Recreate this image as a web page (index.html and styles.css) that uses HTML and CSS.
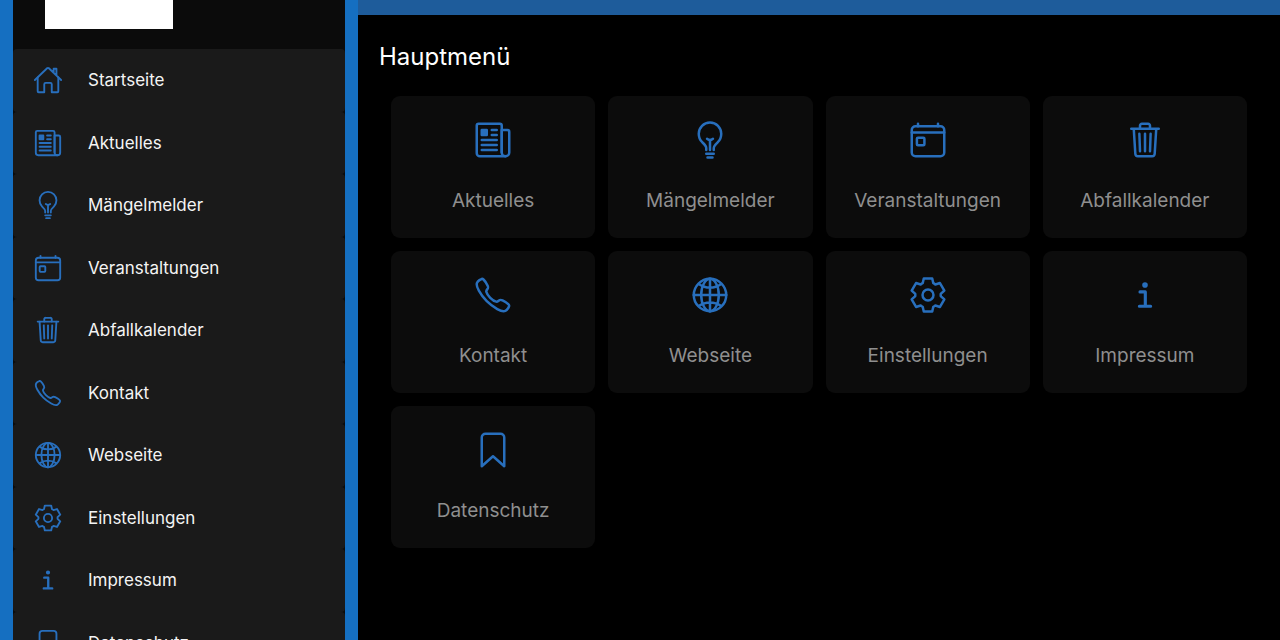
FILE: index.html
```html
<!DOCTYPE html>
<html lang="de">
<head>
    <meta charset="UTF-8">
    <meta name="viewport" content="width=device-width, initial-scale=1.0">
    <title>Hauptmenü</title>
    <link rel="stylesheet" href="styles.css">
</head>
<body>
    <!-- Icons -->
    <svg class="icon-sprite" aria-hidden="true">
        <symbol id="icon-home" viewBox="0 0 512 512">
            <path d="M80 212v236a16 16 0 0016 16h96V328a24 24 0 0124-24h80a24 24 0 0124 24v136h96a16 16 0 0016-16V212"/>
            <path d="M480 256L266.89 52c-5-5.28-16.69-5.34-21.78 0L32 256M400 179V64h-48v69"/>
        </symbol>
        <symbol id="icon-news" viewBox="0 0 512 512">
            <path d="M368 415.86V72a24.07 24.07 0 00-24-24H72a24.07 24.07 0 00-24 24v352a40.12 40.12 0 0040 40h328"/>
            <path d="M416 464h0a48 48 0 01-48-48V128h72a24 24 0 0124 24v264a48 48 0 01-48 48z"/>
            <path d="M240 128h64M240 192h64M112 256h192M112 320h192M112 384h192"/>
            <rect class="solid" x="112" y="128" width="64" height="64"/>
        </symbol>
        <symbol id="icon-bulb" viewBox="0 0 512 512">
            <path d="M304 384v-24c0-29 31.54-56.43 52-76 28.84-27.57 44-64.61 44-108 0-80-63.73-144-144-144a143.6 143.6 0 00-144 144c0 41.84 15.81 81.39 44 108 20.35 19.21 52 46.7 52 76v24M224 480h64M208 432h96M256 384V256"/>
            <path d="M294 240s-21.51 16-38 16-38-16-38-16"/>
        </symbol>
        <symbol id="icon-calendar" viewBox="0 0 512 512">
            <rect x="48" y="80" width="416" height="384" rx="48"/>
            <rect x="114" y="226" width="96" height="96" rx="13"/>
            <path d="M128 80V48M384 80V48M464 160H48"/>
        </symbol>
        <symbol id="icon-trash" viewBox="0 0 512 512">
            <path d="M112 112l20 320c.95 18.49 14.4 32 32 32h184c17.67 0 30.87-13.51 32-32l20-320M80 112h352"/>
            <path d="M192 112V72h0a23.93 23.93 0 0124-24h80a23.93 23.93 0 0124 24h0v40M256 176v224M184 176l8 224M328 176l-8 224"/>
        </symbol>
        <symbol id="icon-call" viewBox="0 0 512 512">
            <path d="M451 374c-15.88-16-54.34-39.35-73-48.76-24.3-12.24-26.3-13.24-45.4.95-12.74 9.47-21.21 17.93-36.12 14.75s-47.31-21.11-75.68-49.39-47.34-61.62-50.53-76.48 5.41-23.23 14.79-36c13.22-18 12.22-21 .92-45.3-8.81-18.9-32.84-57-48.9-72.8C119.9 44 119.9 47 108.83 51.6A160.15 160.15 0 0083 65.37C67 76 58.12 84.83 51.91 98.1s-9 44.38 23.07 102.64 54.57 88.05 101.14 134.49S258.5 406.64 310.85 436c64.76 36.27 89.6 29.2 102.91 23s22.18-15 32.83-31a159.09 159.09 0 0013.8-25.8C465 391.17 468 391.17 451 374z"/>
        </symbol>
        <symbol id="icon-globe" viewBox="0 0 512 512">
            <circle cx="256" cy="256" r="208"/>
            <path d="M256 48c-58.07 0-112.67 93.13-112.67 208S197.93 464 256 464s112.67-93.13 112.67-208S314.07 48 256 48z"/>
            <path d="M117.33 117.33c38.24 27.15 86.38 43.34 138.67 43.34s100.43-16.19 138.67-43.34M394.67 394.67c-38.24-27.15-86.38-43.34-138.67-43.34s-100.43 16.19-138.67 43.34M256 48v416M464 256H48"/>
        </symbol>
        <symbol id="icon-settings" viewBox="0 0 512 512">
            <path d="M202 44L310 44L324 105Q336 110 350 121L409 103L465 199L419 242V270L465 313L409 409L350 391Q336 402 324 407L310 468L202 468L188 407Q176 402 162 391L103 409L47 313L93 270V242L47 199L103 103L162 121Q176 110 188 105Z"/>
            <circle cx="256" cy="256" r="70"/>
        </symbol>
        <symbol id="icon-info" viewBox="0 0 512 512">
            <path class="bold" d="M192 216h68v184M184 400h144"/>
            <circle class="solid" cx="256" cy="128" r="20"/>
        </symbol>
        <symbol id="icon-bookmark" viewBox="0 0 512 512">
            <path d="M352 48H160a48 48 0 00-48 48v368l144-128 144 128V96a48 48 0 00-48-48z"/>
        </symbol>
    </svg>

    <div class="app">
        <aside class="sidebar">
            <div class="sidebar-header">
                <div class="logo"></div>
            </div>
            <nav class="menu">
                <a class="menu-item" href="#start"><svg class="icon"><use href="#icon-home"/></svg>Startseite</a>
                <a class="menu-item" href="#aktuelles"><svg class="icon"><use href="#icon-news"/></svg>Aktuelles</a>
                <a class="menu-item" href="#maengelmelder"><svg class="icon"><use href="#icon-bulb"/></svg>Mängelmelder</a>
                <a class="menu-item" href="#veranstaltungen"><svg class="icon"><use href="#icon-calendar"/></svg>Veranstaltungen</a>
                <a class="menu-item" href="#abfallkalender"><svg class="icon"><use href="#icon-trash"/></svg>Abfallkalender</a>
                <a class="menu-item" href="#kontakt"><svg class="icon"><use href="#icon-call"/></svg>Kontakt</a>
                <a class="menu-item" href="#webseite"><svg class="icon"><use href="#icon-globe"/></svg>Webseite</a>
                <a class="menu-item" href="#einstellungen"><svg class="icon"><use href="#icon-settings"/></svg>Einstellungen</a>
                <a class="menu-item" href="#impressum"><svg class="icon"><use href="#icon-info"/></svg>Impressum</a>
                <a class="menu-item" href="#datenschutz"><svg class="icon"><use href="#icon-bookmark"/></svg>Datenschutz</a>
            </nav>
        </aside>

        <main class="content">
            <h1 class="page-title">Hauptmenü</h1>
            <div class="tiles">
                <a class="tile" href="#aktuelles"><svg class="icon"><use href="#icon-news"/></svg>Aktuelles</a>
                <a class="tile" href="#maengelmelder"><svg class="icon"><use href="#icon-bulb"/></svg>Mängelmelder</a>
                <a class="tile" href="#veranstaltungen"><svg class="icon"><use href="#icon-calendar"/></svg>Veranstaltungen</a>
                <a class="tile" href="#abfallkalender"><svg class="icon"><use href="#icon-trash"/></svg>Abfallkalender</a>
                <a class="tile" href="#kontakt"><svg class="icon"><use href="#icon-call"/></svg>Kontakt</a>
                <a class="tile" href="#webseite"><svg class="icon"><use href="#icon-globe"/></svg>Webseite</a>
                <a class="tile" href="#einstellungen"><svg class="icon"><use href="#icon-settings"/></svg>Einstellungen</a>
                <a class="tile" href="#impressum"><svg class="icon"><use href="#icon-info"/></svg>Impressum</a>
                <a class="tile" href="#datenschutz"><svg class="icon"><use href="#icon-bookmark"/></svg>Datenschutz</a>
            </div>
        </main>
    </div>
</body>
</html>
```
FILE: styles.css
```css
* {
    margin: 0;
    padding: 0;
    box-sizing: border-box;
}

body {
    font-family: Inter, "Liberation Sans", sans-serif;
    background-color: #000;
    color: #fff;
}

a {
    color: inherit;
    text-decoration: none;
}

.icon-sprite {
    display: none;
}

.icon {
    flex-shrink: 0;
    fill: none;
    stroke: #286fbd;
    stroke-width: 32px;
    stroke-linecap: round;
    stroke-linejoin: round;
}

.solid {
    fill: #286fbd;
}

.bold {
    stroke-width: 40px;
}

.app {
    display: flex;
    height: 100vh;
    overflow: hidden;
}

/* Sidebar */
.sidebar {
    flex: 0 0 358px;
    border: solid #156fc1;
    border-width: 0 13px;
    background-color: #0b0b0b;
    overflow: hidden;
}

.sidebar-header {
    padding: 0 32px 20px;
}

.logo {
    width: 128px;
    height: 29px;
    background-color: #fff;
}

.menu {
    display: grid;
    grid-template-rows: repeat(10, 1fr);
    height: 625px;
}

.menu-item {
    display: flex;
    align-items: center;
    gap: 25px;
    padding: 0 20px;
    border-radius: 4px;
    background-color: #1a1a1a;
    color: #f4f4f4;
    font-size: 17px;
}

.menu-item .icon {
    width: 30px;
    height: 30px;
}

/* Content */
.content {
    flex: 1;
    border-top: 15px solid #1e5c9b;
    overflow: hidden;
}

.page-title {
    padding: 27px 21px 24px;
    font-size: 24px;
    font-weight: 400;
    line-height: 30px;
}

.tiles {
    display: grid;
    grid-template-columns: repeat(4, 1fr);
    gap: 13px;
    padding: 0 33px;
}

.tile {
    display: flex;
    flex-direction: column;
    align-items: center;
    gap: 29px;
    padding: 24px 8px 25px;
    border-radius: 9px;
    background-color: #0c0c0c;
    color: #8f8f8f;
    font-size: 19px;
    line-height: 24px;
}

.tile .icon {
    width: 40px;
    height: 40px;
}

@media (max-width: 900px) {
    .tiles {
        grid-template-columns: repeat(2, 1fr);
    }
}
```
